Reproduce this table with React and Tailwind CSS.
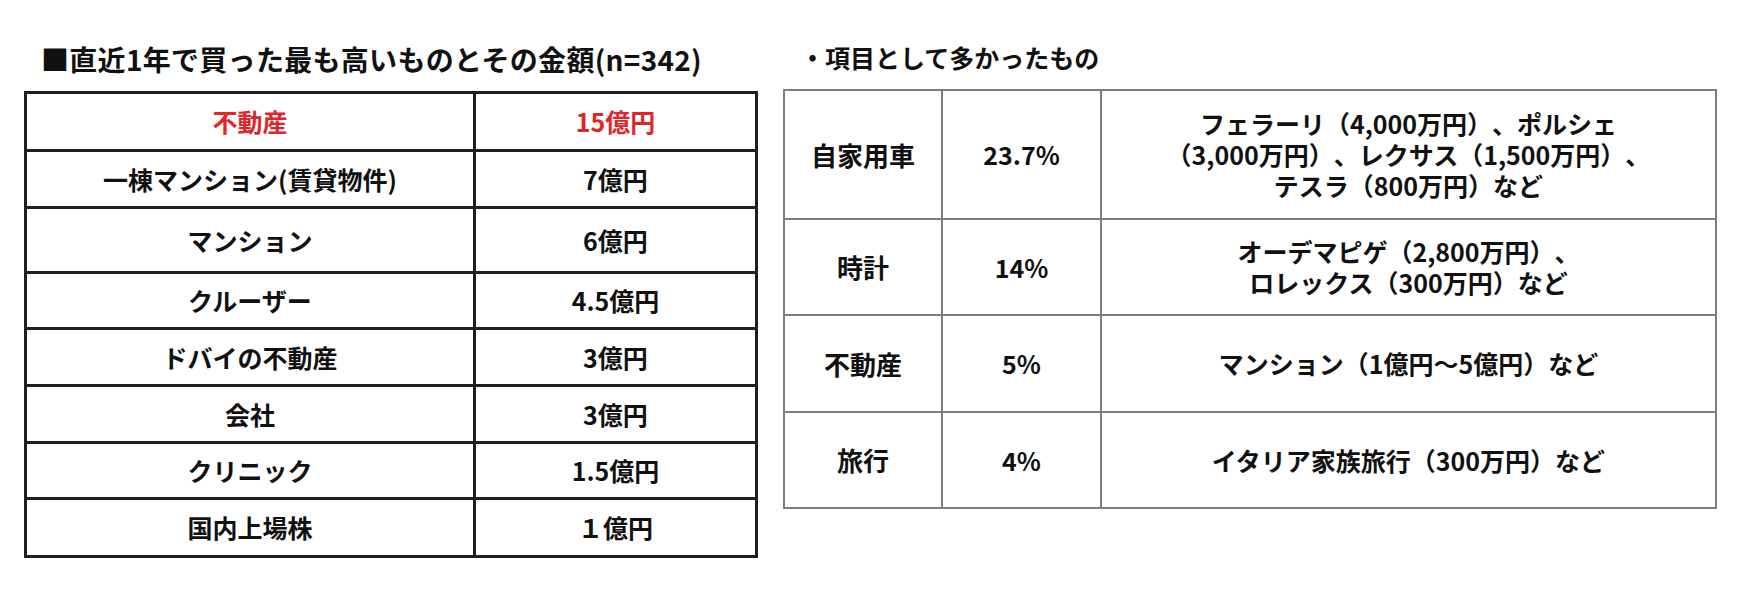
import React from "react";

const leftRows = [
  { a: "不動産", b: "15億円", h: "h-[55px]", red: true },
  { a: "一棟マンション(賃貸物件)", b: "7億円", h: "h-[54px]" },
  { a: "マンション", b: "6億円", h: "h-[62px]" },
  { a: "クルーザー", b: "4.5億円", h: "h-[53px]" },
  { a: "ドバイの不動産", b: "3億円", h: "h-[54px]" },
  { a: "会社", b: "3億円", h: "h-[54px]" },
  { a: "クリニック", b: "1.5億円", h: "h-[53px]" },
  { a: "国内上場株", b: "１億円", h: "h-[55px]" },
];

const rightRows = [
  {
    a: "自家用車",
    b: "23.7%",
    c: ["フェラーリ（4,000万円）、ポルシェ", "（3,000万円）、レクサス（1,500万円）、", "テスラ（800万円）など"],
    h: "h-[127px]",
  },
  { a: "時計", b: "14%", c: ["オーデマピゲ（2,800万円）、", "ロレックス（300万円）など"], h: "h-[94px]" },
  { a: "不動産", b: "5%", c: ["マンション（1億円～5億円）など"], h: "h-[95px]" },
  { a: "旅行", b: "4%", c: ["イタリア家族旅行（300万円）など"], h: "h-[94px]" },
];

export default function App() {
  return (
    <div
      className="w-[1740px] h-[595px] bg-white flex items-start text-[#111] font-bold [text-spacing-trim:space-all]"
      style={{ fontFamily: '"Noto Sans CJK JP", "Noto Sans", sans-serif' }}
    >
      {/* left block */}
      <div className="ml-[24px] w-[734px] flex flex-col">
        <div className="mt-[39px] h-[40px] pl-[17px] flex items-center text-[28px] tracking-[0.3px] leading-none whitespace-nowrap">
          ■直近1年で買った最も高いものとその金額(n=342)
        </div>
        <div className="mt-[12px] w-[734px] border-[3px] border-[#1e1e1e] flex flex-col">
          {leftRows.map((r, i) => (
            <div
              key={i}
              className={`flex box-content ${r.h} ${i > 0 ? "border-t-[3px] border-[#1e1e1e]" : ""} ${
                r.red ? "text-[#e0262b]" : ""
              }`}
            >
              <div className="w-[446px] flex items-center justify-center text-[25px] leading-none whitespace-nowrap">
                {r.a}
              </div>
              <div className="flex-1 border-l-[3px] border-[#1e1e1e] flex items-center justify-center text-[25px] leading-none whitespace-nowrap">
                {r.b}
              </div>
            </div>
          ))}
        </div>
      </div>

      {/* right block */}
      <div className="ml-[25px] w-[934px] flex flex-col">
        <div className="mt-[37px] h-[40px] pl-[17px] flex items-center text-[25px] leading-none whitespace-nowrap">
          ・項目として多かったもの
        </div>
        <div className="mt-[12px] w-[934px] border-2 border-[#7d7d7d] flex flex-col">
          {rightRows.map((r, i) => (
            <div
              key={i}
              className={`flex box-content ${r.h} ${i > 0 ? "border-t-2 border-[#7d7d7d]" : ""}`}
            >
              <div className="w-[156px] flex items-center justify-center text-[26px] leading-none whitespace-nowrap">
                {r.a}
              </div>
              <div className="w-[159px] border-l-2 border-[#7d7d7d] flex items-center justify-center text-[25px] leading-none whitespace-nowrap">
                {r.b}
              </div>
              <div className="flex-1 border-l-2 border-[#7d7d7d] flex flex-col items-center justify-center text-[25px] leading-[31px] whitespace-nowrap">
                {r.c.map((line, j) => (
                  <div key={j}>{line}</div>
                ))}
              </div>
            </div>
          ))}
        </div>
      </div>
    </div>
  );
}
